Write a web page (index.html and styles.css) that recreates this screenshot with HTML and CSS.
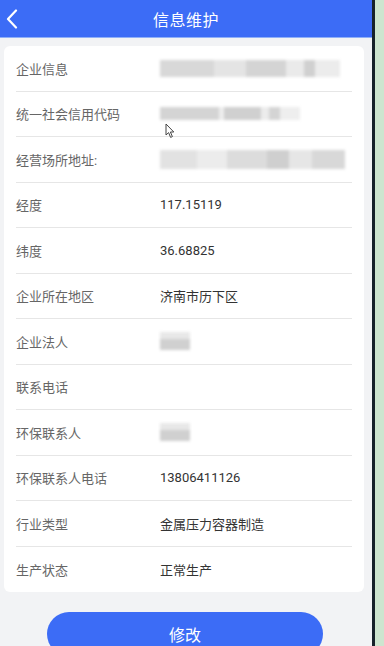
FILE: index.html
```html
<!DOCTYPE html>
<html lang="zh-CN">
<head>
    <meta charset="UTF-8">
    <meta name="viewport" content="width=device-width, initial-scale=1.0">
    <title>信息维护</title>
    <link rel="stylesheet" href="styles.css">
</head>
<body>
    <div class="screen">
        <div class="app">
            <div class="header">
                <svg class="back" width="12" height="20" viewBox="0 0 12 20">
                    <path d="M10 1.5 L2 10 L10 18.5" fill="none" stroke="#fff" stroke-width="2.2" stroke-linecap="round" stroke-linejoin="round"/>
                </svg>
                <span class="title">信息维护</span>
            </div>
            <div class="content">
                <div class="card">
                    <div class="row"><span class="label">企业信息</span><span class="value"><i class="blur b1"></i></span></div>
                    <div class="row"><span class="label">统一社会信用代码</span><span class="value"><i class="blur b2"></i>
                        <svg class="cursor" width="10" height="16" viewBox="0 0 10 16"><path d="M1 1 L1 12 L3.6 9.6 L5.6 14.4 L7.4 13.6 L5.4 9 L8.8 9 Z" fill="#fff" stroke="#444" stroke-width="1" stroke-linejoin="round"/></svg>
                    </span></div>
                    <div class="row"><span class="label">经营场所地址:</span><span class="value"><i class="blur b3"></i></span></div>
                    <div class="row"><span class="label">经度</span><span class="value">117.15119</span></div>
                    <div class="row"><span class="label">纬度</span><span class="value">36.68825</span></div>
                    <div class="row"><span class="label">企业所在地区</span><span class="value">济南市历下区</span></div>
                    <div class="row"><span class="label">企业法人</span><span class="value"><i class="blur b4"></i></span></div>
                    <div class="row"><span class="label">联系电话</span><span class="value"></span></div>
                    <div class="row"><span class="label">环保联系人</span><span class="value"><i class="blur b4"></i></span></div>
                    <div class="row"><span class="label">环保联系人电话</span><span class="value">13806411126</span></div>
                    <div class="row"><span class="label">行业类型</span><span class="value">金属压力容器制造</span></div>
                    <div class="row last"><span class="label">生产状态</span><span class="value">正常生产</span></div>
                </div>
                <div class="actions">
                    <button class="btn">修改</button>
                </div>
            </div>
        </div>
        <div class="edge"></div>
        <div class="side"></div>
    </div>
</body>
</html>
```

FILE: styles.css
```css
* {
    box-sizing: border-box;
}

html,
body {
    margin: 0;
    padding: 0;
    height: 100%;
    overflow: hidden;
}

body {
    font-family: Roboto, "Noto Sans CJK SC", "Noto Sans", sans-serif;
}

.screen {
    display: flex;
    height: 646px;
}

.app {
    width: 372px;
    background-color: #f2f3f5;
    display: flex;
    flex-direction: column;
    overflow: hidden;
}

.edge {
    width: 3px;
    background-color: #16222a;
}

.side {
    flex: 1;
    background-color: #cde5cf;
}

.header {
    flex-shrink: 0;
    height: 38px;
    background-color: #3c6cf6;
    display: flex;
    align-items: center;
    justify-content: center;
    position: relative;
    border-bottom: 1px solid #8fb0f8;
}

.back {
    position: absolute;
    left: 6px;
    top: 9px;
}

.title {
    color: #fff;
    font-size: 16px;
    letter-spacing: 0.5px;
}

.content {
    flex-shrink: 0;
    padding: 8px 8px 0 4px;
}

.card {
    background-color: #fff;
    border-radius: 6px;
    padding: 0 12px;
}

.row {
    display: flex;
    align-items: center;
    height: 45.5px;
    border-bottom: 1px solid #e6e6e6;
    font-size: 13px;
}

.row.last {
    border-bottom: none;
}

.label {
    width: 144px;
    color: #666;
}

.value {
    color: #333;
    position: relative;
    flex: 1;
    display: flex;
    align-items: center;
}

.blur {
    display: block;
    height: 17px;
    filter: blur(1.5px);
}

.b1 {
    width: 180px;
    background: linear-gradient(90deg, #d8d8d8 0 30%, #e4e4e4 30% 48%, #d4d4d4 48% 70%, #eaeaea 70% 80%, #d0d0d0 80% 86%, #ececec 86%);
}

.b2 {
    width: 140px;
    height: 13px;
    background: linear-gradient(90deg, #d4d4d4 0 42%, #eeeeee 42% 46%, #d0d0d0 46% 72%, #ececec 72% 78%, #d4d4d4 78% 86%, #eeeeee 86%);
}

.b3 {
    width: 185px;
    height: 19px;
    background: linear-gradient(90deg, #e2e2e2 0 20%, #ececec 20% 36%, #dcdcdc 36% 58%, #cfcfcf 58% 70%, #e6e6e6 70% 82%, #d8d8d8 82%);
}

.b4 {
    width: 30px;
    height: 18px;
    background: linear-gradient(180deg, #e8e8e8 0 40%, #d0d0d0 40%);
}

.cursor {
    position: absolute;
    left: 5px;
    top: 16px;
}

.actions {
    display: flex;
    justify-content: center;
    padding: 20px 0 0 2px;
}

.btn {
    width: 276px;
    height: 44px;
    border: none;
    border-radius: 22px;
    background-color: #3c6cf6;
    color: #fff;
    font-family: inherit;
    font-size: 16px;
    padding: 0;
}
```
